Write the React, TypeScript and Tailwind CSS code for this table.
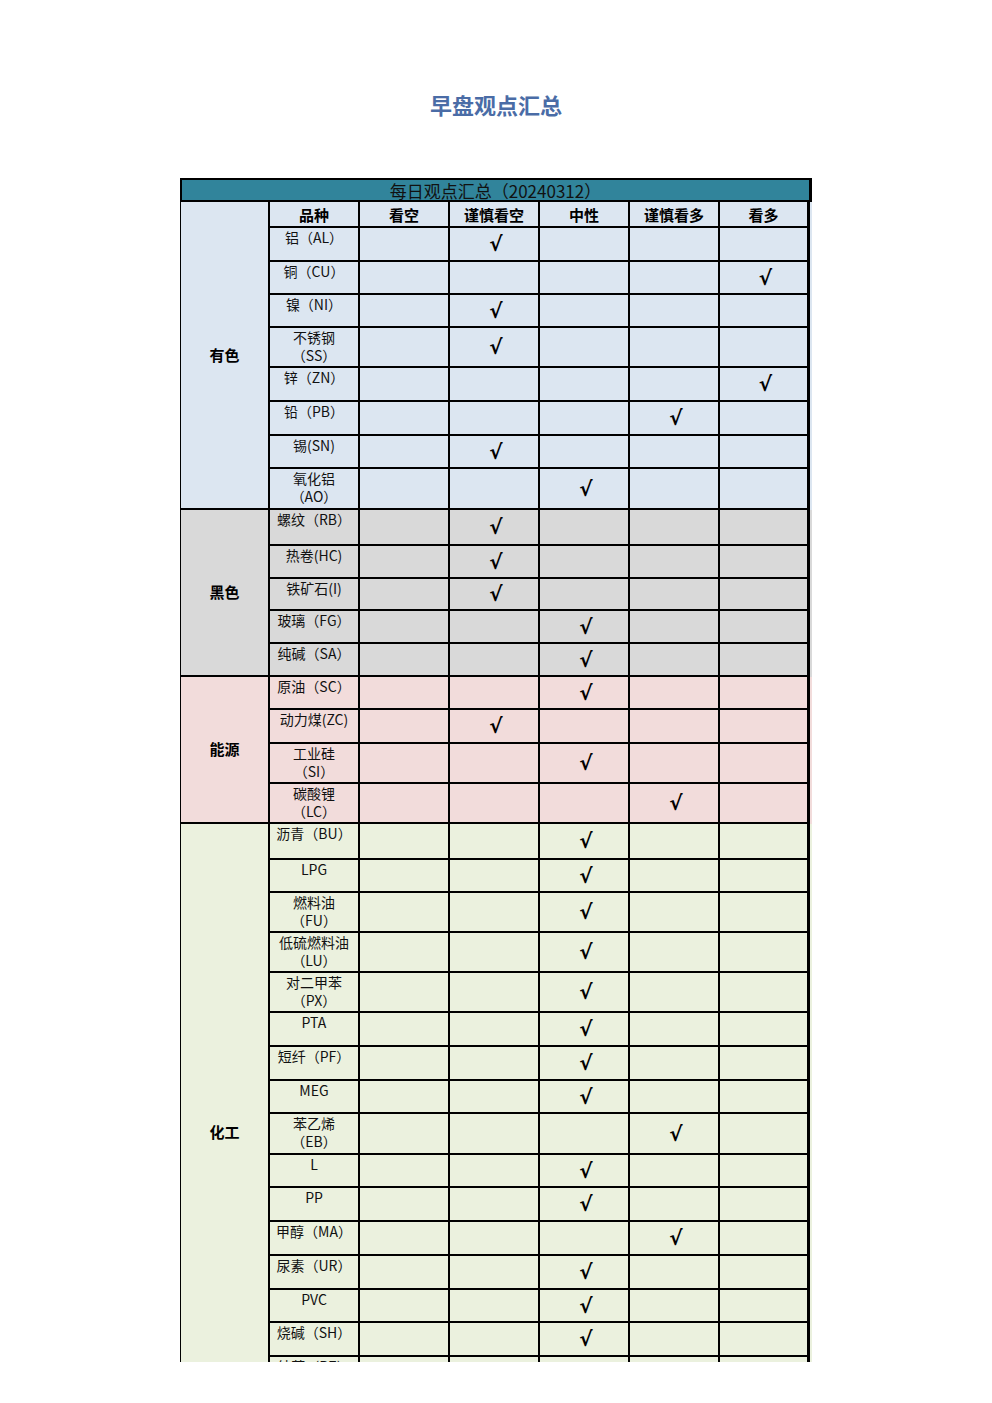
type Row = { name: string[]; h: string; check: number };
type Group = { label: string; bg: string; header?: boolean; rows: Row[] };

const cols = ['看空', '谨慎看空', '中性', '谨慎看多', '看多'];

const groups: Group[] = [
  {
    label: '有色',
    bg: 'bg-[#dce6f1]',
    header: true,
    rows: [
      { name: ['铝（AL）'], h: 'h-[34px]', check: 1 },
      { name: ['铜（CU）'], h: 'h-[33px]', check: 4 },
      { name: ['镍（NI）'], h: 'h-[33px]', check: 1 },
      { name: ['不锈钢', '（SS）'], h: 'h-[40px]', check: 1 },
      { name: ['锌（ZN）'], h: 'h-[34px]', check: 4 },
      { name: ['铅（PB）'], h: 'h-[34px]', check: 3 },
      { name: ['锡(SN)'], h: 'h-[33px]', check: 1 },
      { name: ['氧化铝', '（AO）'], h: 'h-[41px]', check: 2 },
    ],
  },
  {
    label: '黑色',
    bg: 'bg-[#d9d9d9]',
    rows: [
      { name: ['螺纹（RB）'], h: 'h-[36px]', check: 1 },
      { name: ['热卷(HC)'], h: 'h-[33px]', check: 1 },
      { name: ['铁矿石(I)'], h: 'h-[32px]', check: 1 },
      { name: ['玻璃（FG）'], h: 'h-[33px]', check: 2 },
      { name: ['纯碱（SA）'], h: 'h-[33px]', check: 2 },
    ],
  },
  {
    label: '能源',
    bg: 'bg-[#f2dcdb]',
    rows: [
      { name: ['原油（SC）'], h: 'h-[33px]', check: 2 },
      { name: ['动力煤(ZC)'], h: 'h-[34px]', check: 1 },
      { name: ['工业硅', '（SI）'], h: 'h-[40px]', check: 2 },
      { name: ['碳酸锂', '（LC）'], h: 'h-[40px]', check: 3 },
    ],
  },
  {
    label: '化工',
    bg: 'bg-[#ebf1de]',
    rows: [
      { name: ['沥青（BU）'], h: 'h-[36px]', check: 2 },
      { name: ['LPG'], h: 'h-[33px]', check: 2 },
      { name: ['燃料油', '（FU）'], h: 'h-[40px]', check: 2 },
      { name: ['低硫燃料油', '（LU）'], h: 'h-[40px]', check: 2 },
      { name: ['对二甲苯', '（PX）'], h: 'h-[40px]', check: 2 },
      { name: ['PTA'], h: 'h-[34px]', check: 2 },
      { name: ['短纤（PF）'], h: 'h-[34px]', check: 2 },
      { name: ['MEG'], h: 'h-[33px]', check: 2 },
      { name: ['苯乙烯', '（EB）'], h: 'h-[41px]', check: 3 },
      { name: ['L'], h: 'h-[33px]', check: 2 },
      { name: ['PP'], h: 'h-[34px]', check: 2 },
      { name: ['甲醇（MA）'], h: 'h-[34px]', check: 3 },
      { name: ['尿素（UR）'], h: 'h-[34px]', check: 2 },
      { name: ['PVC'], h: 'h-[33px]', check: 2 },
      { name: ['烧碱（SH）'], h: 'h-[34px]', check: 2 },
      { name: ['纯苯（BZ）'], h: 'h-[34px]', check: 2 },
      { name: ['丙烯', '（PL）'], h: 'h-[51px]', check: 2 },
    ],
  },
];

const cell = 'w-[90px] shrink-0 border-r-2 border-b-2 border-black';

const ProductRow = ({ row }: { row: Row }) => (
  <div className={`flex ${row.h}`}>
    <div className={`${cell} flex flex-col items-center text-[14px] leading-[18px] text-[#111]`}>
      {row.name.map((line) => (
        <span key={line} className="whitespace-nowrap">
          {line}
        </span>
      ))}
    </div>
    {cols.map((c, i) => (
      <div
        key={c}
        className={`${cell} ${i === cols.length - 1 ? 'border-r-[3px]' : ''} flex items-center justify-center`}
      >
        {row.check === i && (
          <span className="font-['DejaVu_Sans',sans-serif] text-[20px] font-bold leading-none text-black translate-x-[2px]">
            √
          </span>
        )}
      </div>
    ))}
  </div>
);

const App = () => {
  return (
    <div className="min-h-[1403px] bg-white font-['Noto_Sans_CJK_SC',sans-serif] text-black">
      <h1 className="pt-[90px] text-center text-[22px] font-bold leading-[28px] text-[#4a6ca6]">
        早盘观点汇总
      </h1>

      <div className="mx-auto mt-[60px] h-[1184px] w-[632px] overflow-hidden">
        <div className="flex h-[24px] items-center justify-center border-2 border-r-[3px] border-black bg-[#31849b] text-[17px] leading-none text-[#111]">
          每日观点汇总（20240312）
        </div>

        {groups.map((g) => (
          <div key={g.label} className={`flex ${g.bg}`}>
            <div className="flex w-[90px] shrink-0 items-center justify-center border-b-2 border-l border-r-2 border-black text-[15px] font-bold">
              {g.label}
            </div>
            <div className="flex flex-col">
              {g.header && (
                <div className="flex h-[26px]">
                  {['品种', ...cols].map((c, i) => (
                    <div
                      key={c}
                      className={`${cell} ${i === cols.length ? 'border-r-[3px]' : ''} flex items-center justify-center text-[15px] font-bold leading-none`}
                    >
                      {c}
                    </div>
                  ))}
                </div>
              )}
              {g.rows.map((r) => (
                <ProductRow key={r.name.join('')} row={r} />
              ))}
            </div>
          </div>
        ))}
      </div>
    </div>
  );
};

export default App;
